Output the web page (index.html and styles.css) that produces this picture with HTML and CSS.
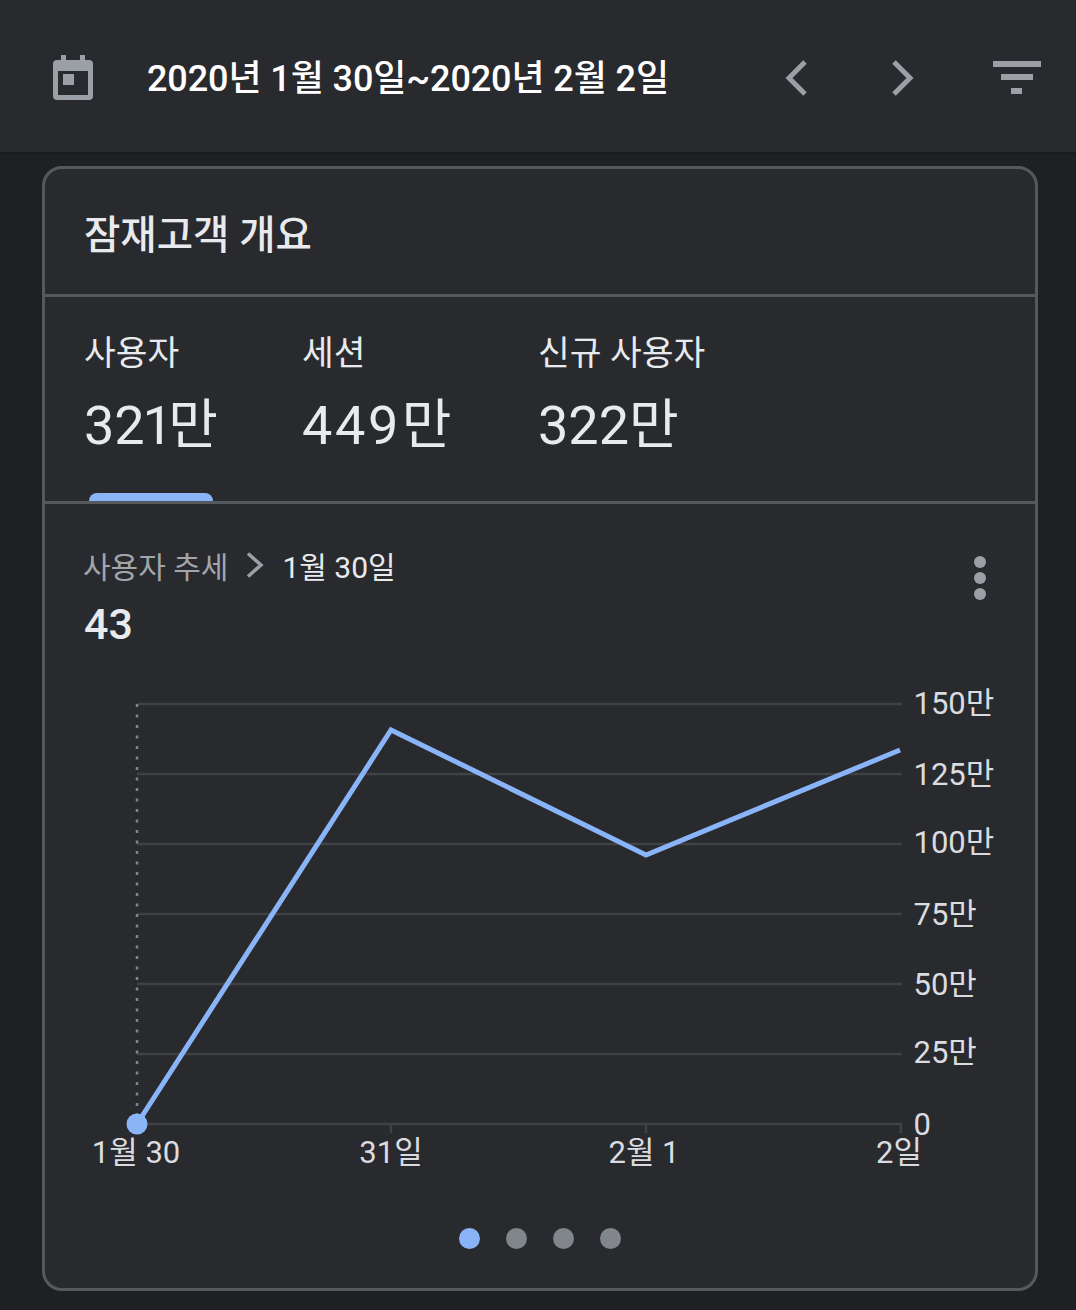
FILE: index.html
```html
<!DOCTYPE html>
<html lang="ko">
<head>
  <meta charset="UTF-8" />
  <title>잠재고객 개요</title>
  <link rel="stylesheet" href="styles.css">
</head>
<body>
  <header class="date-bar">
    <svg class="icon-calendar" width="42" height="46" viewBox="0 0 42 46">
      <path fill="#9aa0a6" d="M9 0h5v5h14V0h5v5h4a4 4 0 0 1 4 4v32a4 4 0 0 1-4 4H5a4 4 0 0 1-4-4V9a4 4 0 0 1 4-4h4zM6 16v24h30V16zM11 19h11v11H11z"/>
    </svg>
    <div class="date-range">2020년 1월 30일~2020년 2월 2일</div>
    <svg class="icon-prev" width="24" height="36" viewBox="0 0 24 36">
      <path fill="none" stroke="#9aa0a6" stroke-width="5" d="M21 2L5 18l16 16"/>
    </svg>
    <svg class="icon-next" width="24" height="36" viewBox="0 0 24 36">
      <path fill="none" stroke="#9aa0a6" stroke-width="5" d="M3 2l16 16L3 34"/>
    </svg>
    <svg class="icon-filter" width="48" height="34" viewBox="0 0 48 34">
      <path fill="#9aa0a6" d="M0 0h48v6H0zM8 13h32v6H8zM18 27h11v6H18z"/>
    </svg>
  </header>

  <main class="card">
    <h2 class="card-title">잠재고객 개요</h2>

    <div class="tabs">
      <div class="tab tab-active">
        <div class="tab-label">사용자</div>
        <div class="tab-value">321만</div>
      </div>
      <div class="tab tab-sessions">
        <div class="tab-label">세션</div>
        <div class="tab-value">449만</div>
      </div>
      <div class="tab">
        <div class="tab-label">신규 사용자</div>
        <div class="tab-value">322만</div>
      </div>
    </div>

    <div class="trend">
      <div class="trend-head">
        <div>
          <div class="crumbs">
            <span class="crumb-parent">사용자 추세</span>
            <svg width="18" height="26" viewBox="0 0 18 26">
              <path fill="none" stroke="#9aa0a6" stroke-width="3.5" d="M2 1.5L15 13 2 24.5"/>
            </svg>
            <span class="crumb-current">1월 30일</span>
          </div>
          <div class="trend-value">43</div>
        </div>
        <div class="more-dots"><i></i><i></i><i></i></div>
      </div>

      <svg class="chart" width="989" height="510" viewBox="45 680 989 510">
        <g class="grid">
          <path d="M137 704H902M137 774H902M137 844H902M137 914H902M137 984H902M137 1054H902M137 1124H902"/>
          <path d="M391 1124v9M646 1124v9M901 1124v9"/>
        </g>
        <path class="cursor" d="M137 704V1124"/>
        <path class="series" d="M137 1124L391 730 646 855 900 750"/>
        <circle class="marker" cx="137" cy="1124" r="10.5"/>
        <g class="y-labels">
          <text x="913.5" y="714">150만</text>
          <text x="913.5" y="785">125만</text>
          <text x="913.5" y="853">100만</text>
          <text x="913.5" y="925">75만</text>
          <text x="913.5" y="995">50만</text>
          <text x="913.5" y="1063">25만</text>
          <text x="913.5" y="1135">0</text>
        </g>
        <g class="x-labels">
          <text x="136" y="1163">1월 30</text>
          <text x="391" y="1163">31일</text>
          <text x="644" y="1163">2월 1</text>
          <text x="899" y="1163">2일</text>
        </g>
      </svg>

      <div class="pager">
        <span class="pager-dot pager-dot-on"></span>
        <span class="pager-dot"></span>
        <span class="pager-dot"></span>
        <span class="pager-dot"></span>
      </div>
    </div>
  </main>
</body>
</html>
```

FILE: styles.css
```css
* {
  box-sizing: border-box;
}

html,
body {
  height: 1310px;
  overflow: hidden;
}

body {
  margin: 0;
  background-color: #1f2023;
  color: #e8eaed;
  font-family: Roboto, "Noto Sans CJK KR", sans-serif;
}

/* Top date bar */
.date-bar {
  display: flex;
  align-items: center;
  height: 152px;
  padding: 4px 35px 0 52px;
  background-color: #292a2e;
  box-shadow: 0 1px 3px rgba(0, 0, 0, 0.25);
}

.date-range {
  margin-left: 53px;
  margin-top: -6px;
  width: 637px;
  font-size: 36px;
  font-weight: 500;
  letter-spacing: -0.1px;
  color: #fff;
  white-space: nowrap;
}

.icon-next {
  margin-left: 83px;
}

.icon-filter {
  margin-left: 78px;
}

/* Card */
.card {
  margin: 14px 38px 0 42px;
  height: 1125px;
  background-color: #292a2e;
  border: 3px solid #55585c;
  border-radius: 20px;
}

.card-title {
  margin: 0;
  height: 128px;
  padding: 0 39px;
  border-bottom: 3px solid #55585c;
  font-size: 39.5px;
  font-weight: 500;
  line-height: 134px;
}

/* Metric tabs */
.tabs {
  display: flex;
  height: 207px;
  padding: 34px 39px 0;
  border-bottom: 3px solid #55585c;
}

.tab {
  position: relative;
}

.tab-active {
  width: 218px;
}

.tab-active::after {
  content: "";
  position: absolute;
  left: 5px;
  top: 162px;
  bottom: 0;
  width: 124px;
  background-color: #8ab4f8;
  border-radius: 8px 8px 0 0;
}

.tab-sessions {
  width: 236px;
}

.tab-label {
  font-size: 34.5px;
  line-height: 44px;
}

.tab-value {
  margin-top: 15px;
  font-size: 54px;
  line-height: 72px;
  font-variant-numeric: proportional-nums;
}

/* the 4s run wider in this figure */
.tab-sessions .tab-value {
  letter-spacing: 2.7px;
}

/* Trend chart */
.trend {
  padding-top: 41px;
}

.trend-head {
  display: flex;
  justify-content: space-between;
  height: 135px;
  padding: 0 49px 0 39px;
}

.crumbs {
  display: flex;
  align-items: center;
  gap: 18px;
  height: 40px;
  margin-left: -1px;
  font-size: 30px;
}

.crumb-parent {
  color: #a2a6ab;
}

.crumb-current {
  color: #e8eaed;
}

.trend-value {
  margin-top: 15px;
  font-size: 43px;
  font-weight: 500;
  line-height: 48px;
}

.more-dots {
  display: flex;
  flex-direction: column;
  gap: 4px;
  padding-top: 11px;
}

.more-dots i {
  width: 12px;
  height: 12px;
  border-radius: 50%;
  background-color: #9aa0a6;
}

.chart {
  display: block;
}

.chart text {
  font-size: 31px;
  fill: #dadce0;
}

.grid path {
  fill: none;
  stroke: #3f4145;
  stroke-width: 2.5;
}

.cursor {
  fill: none;
  stroke: #80868b;
  stroke-width: 2.5;
  stroke-dasharray: 3 7.5;
}

.series {
  fill: none;
  stroke: #8ab4f8;
  stroke-width: 5;
}

.marker {
  fill: #8ab4f8;
}

.x-labels text {
  text-anchor: middle;
}

.pager {
  display: flex;
  justify-content: center;
  gap: 26px;
  margin-top: 38px;
}

.pager-dot {
  width: 21px;
  height: 21px;
  border-radius: 50%;
  background-color: #80868b;
}

.pager-dot-on {
  background-color: #8ab4f8;
}
```
